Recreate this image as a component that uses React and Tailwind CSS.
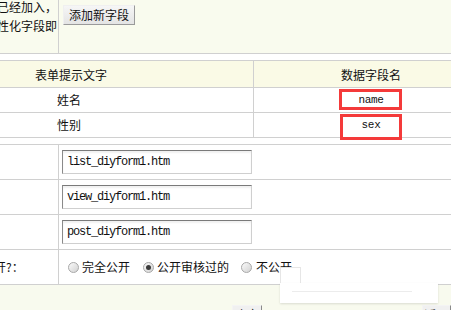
import React from "react";

const cjk = "font-['Noto_Sans_CJK_SC','Noto_Sans',sans-serif]";
const mono = "font-['Liberation_Mono','DejaVu_Sans_Mono',monospace]";

function Radio({ checked }) {
  return (
    <span className="relative inline-flex w-[11px] h-[11px] shrink-0 rounded-full border border-[#a8a8a8] bg-gradient-to-br from-[#fafafa] to-[#d2d2d2] items-center justify-center">
      {checked && <span className="w-[5px] h-[5px] rounded-full bg-[#3a3a3a]" />}
    </span>
  );
}

function InputRow({ value }) {
  return (
    <div className="flex h-[35px] border-b border-[#d0d0d0]">
      <div className="w-[59px] shrink-0 border-r border-[#d0d0d0]" />
      <div className="flex items-center pl-[3px]">
        <div
          className={`w-[190px] h-[24px] flex items-center pl-[4px] bg-white border border-t-[#7a7a7a] border-l-[#8a8a8a] border-r-[#cfcfcf] border-b-[#cfcfcf] shadow-[inset_0_2px_2px_rgba(0,0,0,0.06)] ${mono} text-[12px] tracking-[-1.2px] text-[#111]`}
        >
          {value}
        </div>
      </div>
    </div>
  );
}

export default function App() {
  return (
    <div className={`relative w-[451px] h-[310px] overflow-hidden bg-white text-[#111] ${cjk} text-[12px]`}>
      {/* top section */}
      <div className="flex h-[54px] bg-[#f9fbee] border-b border-[#d0d0d0]">
        <div className="w-[59px] shrink-0 border-r border-[#d0d0d0] overflow-hidden">
          <div className="-ml-[3px] -mt-[3px] leading-[19px] whitespace-nowrap">
            <div>已经加入，</div>
            <div>性化字段即</div>
          </div>
        </div>
        <div className="pl-[4px] pt-[5px]">
          <button className="w-[72px] h-[20px] flex items-center justify-center bg-gradient-to-b from-[#f6f6f6] to-[#e4e4e4] border border-t-[#f0f0f0] border-l-[#f0f0f0] border-r-[#9a9a9a] border-b-[#9a9a9a] text-[12px] leading-none text-[#111]">
            添加新字段
          </button>
        </div>
      </div>

      <div className="h-[6px]" />

      {/* field table */}
      <div className="border-t border-[#d0d0d0]">
        <div className="flex h-[27px] bg-[#fafae6] border-b border-[#d0d0d0]">
          <div className="w-[254px] shrink-0 border-r border-[#d0d0d0] flex items-center pl-[35px] pt-[2px]">
            表单提示文字
          </div>
          <div className="w-[234px] shrink-0 flex items-center justify-center pt-[2px]">数据字段名</div>
        </div>
        <div className="flex h-[25px] border-b border-[#d0d0d0]">
          <div className="w-[254px] shrink-0 border-r border-[#d0d0d0] flex items-center pl-[57px]">姓名</div>
          <div className={`w-[234px] shrink-0 flex items-center justify-center ${mono} text-[11px] tracking-[-0.3px]`}>
            name
          </div>
        </div>
        <div className="flex h-[25px] border-b border-[#d0d0d0]">
          <div className="w-[254px] shrink-0 border-r border-[#d0d0d0] flex items-center pl-[57px]">性别</div>
          <div className={`w-[234px] shrink-0 flex items-center justify-center ${mono} text-[11px] tracking-[-0.3px]`}>
            sex
          </div>
        </div>
      </div>

      <div className="h-[6px]" />

      {/* template table */}
      <div className="border-t border-[#d0d0d0]">
        <InputRow value="list_diyform1.htm" />
        <InputRow value="view_diyform1.htm" />
        <InputRow value="post_diyform1.htm" />
        <div className="flex h-[35px] border-b border-[#d0d0d0]">
          <div className="w-[59px] shrink-0 border-r border-[#d0d0d0] overflow-hidden flex items-center">
            <div className="-ml-[6px] whitespace-nowrap">开?：</div>
          </div>
          <div className="flex items-center pl-[9px]">
            <Radio />
            <span className="ml-[3px]">完全公开</span>
            <span className="ml-[13px]" />
            <Radio checked />
            <span className="ml-[3px]">公开审核过的</span>
            <span className="ml-[12px]" />
            <Radio />
            <span className="ml-[4px] whitespace-nowrap">不公开</span>
          </div>
        </div>
      </div>

      {/* bottom */}
      <div className="h-[40px] bg-[#f8faee] flex pt-[20px]">
        <button className="ml-[232px] w-[35px] h-[20px] flex items-start justify-center pt-[3px] bg-[#f0f0f0] border border-t-[#f4f4f4] border-l-[#f4f4f4] border-r-[#8a8a8a] border-b-[#8a8a8a] text-[12px] leading-none">
          确定
        </button>
        <button className="ml-[160px] w-[35px] h-[20px] flex items-start justify-center pt-[3px] bg-[#f0f0f0] border border-t-[#f4f4f4] border-l-[#f4f4f4] border-r-[#8a8a8a] border-b-[#8a8a8a] text-[12px] leading-none">
          返回
        </button>
      </div>

      {/* red annotation boxes */}
      <div className="absolute left-[339px] top-[89px] w-[63px] h-[21px] border-[3px] border-[#f43a3a]" />
      <div className="absolute left-[340px] top-[114px] w-[62px] h-[26px] border-[3px] border-[#f43a3a]" />

      {/* white glitch overlay */}
      <div className="absolute left-[280px] top-[267px] w-[21px] h-[17px] bg-white border border-[#e6e6e6]" />
      <div className="absolute left-[280px] top-[283px] w-[158px] h-[20px] bg-white shadow-[0_1px_2px_rgba(0,0,0,0.12)]">
        <div className="absolute left-[12px] top-[8px] w-[120px] h-px bg-[#ececec]" />
      </div>
    </div>
  );
}
